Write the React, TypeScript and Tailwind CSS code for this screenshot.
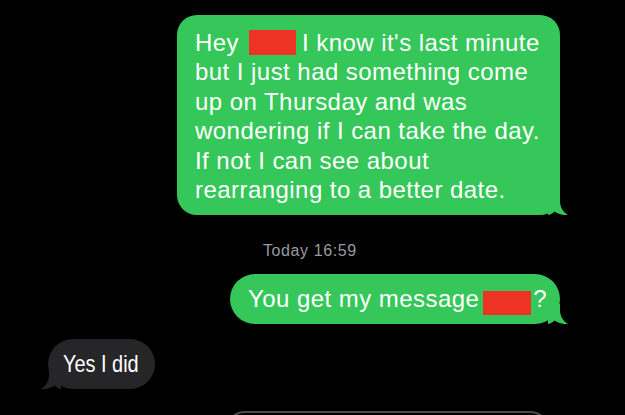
import React from "react";

const GREEN = "#35c759";

function Tail({ color, side }: { color: string; side: "right" | "left" }) {
  return (
    <svg
      width="20"
      height="20"
      viewBox="0 0 20 20"
      className={
        side === "right"
          ? "absolute bottom-0 right-[-8px]"
          : "absolute bottom-0 left-[-7px] -scale-x-100"
      }
    >
      <path
        d="M12 0 L12 6 C12 12 15 17 20 20 C15 20.5 10 19 6.5 16.5 C5 18 2 20 0 20 L0 0 Z"
        fill={color}
      />
    </svg>
  );
}

export default function App() {
  return (
    <div
      className="w-[625px] h-[415px] overflow-hidden bg-black flex flex-col pt-[15px]"
      style={{ fontFamily: '"Liberation Sans", Arial, sans-serif' }}
    >
      {/* Bubble 1 */}
      <div className="flex justify-end pr-[65px]">
        <div className="relative w-[383px] h-[200px] rounded-[20px] bg-[#35c759] pl-[18px] pt-[13px] text-white text-[24px] leading-[29.4px] tracking-[0.45px]">
          <div className="whitespace-nowrap">
            Hey
            <span className="inline-block w-[47px] h-[25px] bg-[#ee3224] ml-[10px] mr-[6px] align-[-4px]" />
            I know it's last minute
            <br />
            but I just had something come
            <br />
            up on Thursday and was
            <br />
            wondering if I can take the day.
            <br />
            If not I can see about
            <br />
            rearranging to a better date.
          </div>
          <Tail color={GREEN} side="right" />
        </div>
      </div>

      {/* Timestamp */}
      <div className="mt-[27px] pl-[263px] text-[16px] leading-[18px] tracking-[0.6px] text-[#9a9a9e]">
        Today 16:59
      </div>

      {/* Bubble 2 */}
      <div className="mt-[14px] flex justify-end pr-[65px]">
        <div className="relative w-[330px] h-[50px] rounded-[25px] bg-[#35c759] pl-[18px] flex items-center text-white text-[24px] leading-[29.4px] tracking-[0.45px]">
          <div className="whitespace-nowrap">
            You get my message
            <span className="inline-block w-[48px] h-[24px] bg-[#ee3224] ml-[4px] mr-[2px] align-[-8px]" />
            ?
          </div>
          <Tail color={GREEN} side="right" />
        </div>
      </div>

      {/* Bubble 3 */}
      <div className="mt-[15px] flex justify-start pl-[48px]">
        <div className="relative w-[107px] h-[50px] rounded-[25px] bg-[#262628] pl-[15px] flex items-center text-white text-[24px] leading-[29.4px]">
          <div className="whitespace-nowrap origin-left scale-x-[0.83]">Yes I did</div>
          <Tail color="#262628" side="left" />
        </div>
      </div>

      {/* Input outline */}
      <div className="mt-[22px] ml-[225px] w-[325px] h-[40px] shrink-0 rounded-[20px] border-2 border-[#4a4a4c]" />
    </div>
  );
}
